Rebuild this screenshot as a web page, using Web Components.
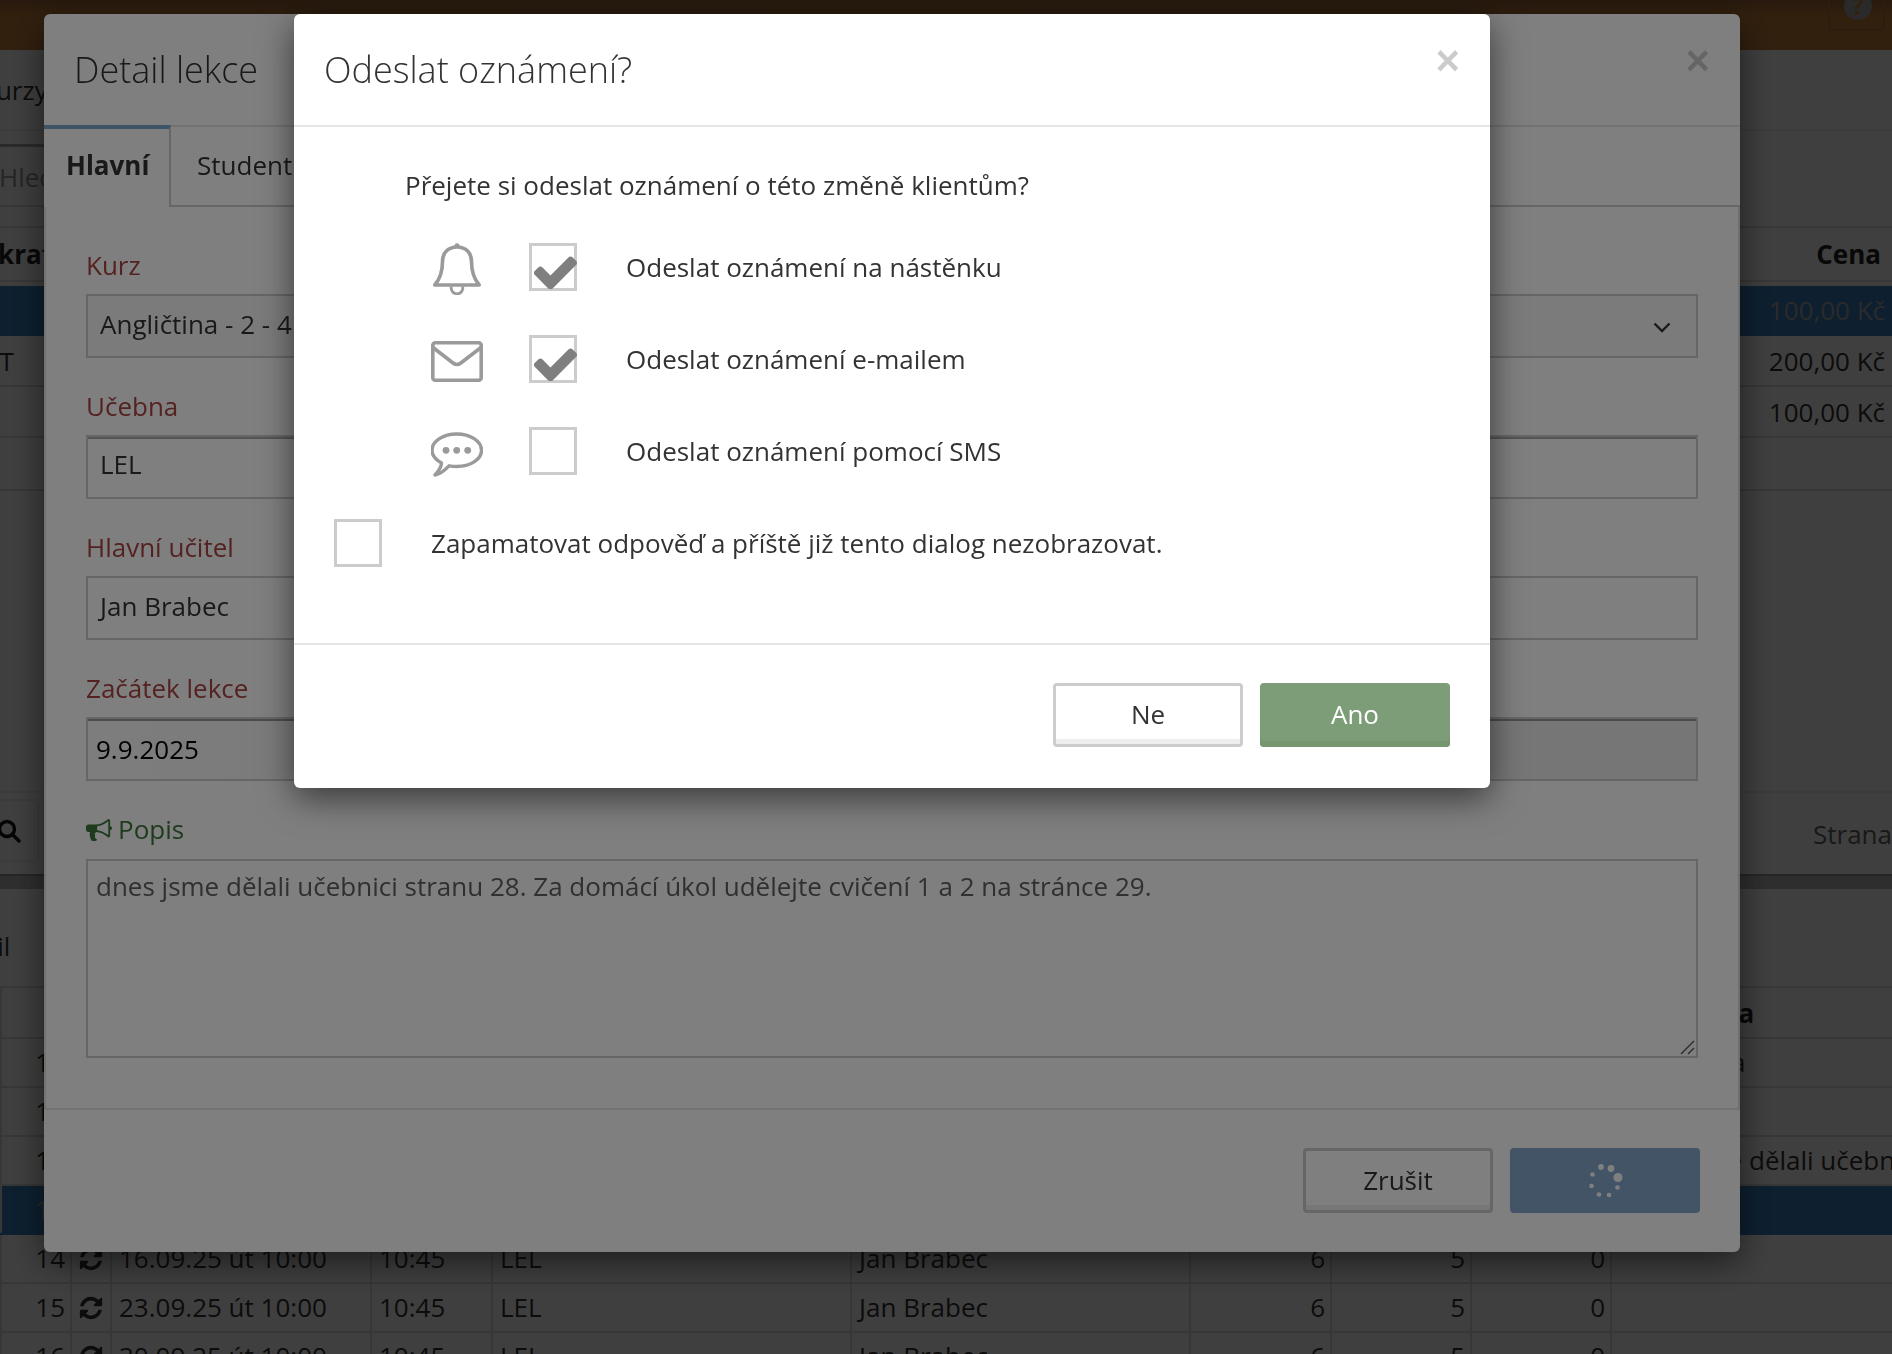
<!DOCTYPE html>
<html lang="cs">
<head>
<meta charset="utf-8">
<title>Odeslat oznámení?</title>
<style>
    html, body { margin: 0; height: 100%; overflow: hidden; }
    body { font: 26px/36px "Open Sans", sans-serif; color: #333; background: #fff; }
</style>
</head>
<body>
<lesson-page></lesson-page>
<dim-layer></dim-layer>

<modal-box style="left:44px; top:14px; width:1696px; height:1238px; --foot-bottom:39px; --btn-height:65px;">
    <span slot="title">Detail lekce</span>
    <lesson-form></lesson-form>
    <action-button slot="footer">Zrušit</action-button>
    <action-button slot="footer" kind="busy"></action-button>
</modal-box>

<dim-layer></dim-layer>

<modal-box style="left:294px; top:14px; width:1196px; height:774px; --foot-bottom:41px; --btn-height:64px;">
    <span slot="title">Odeslat oznámení?</span>
    <notify-form></notify-form>
    <action-button slot="footer">Ne</action-button>
    <action-button slot="footer" kind="ok">Ano</action-button>
</modal-box>

<script>
const ICONS = {
    check: `<svg width="43" height="35" viewBox="123 250 1548 1250"><path fill="#7f7f7f" d="M1671 566q0 40-28 68l-724 724-136 136q-28 28-68 28t-68-28l-136-136-362-362q-28-28-28-68t28-68l136-136q28-28 68-28t68 28l294 295 656-657q28-28 68-28t68 28l136 136q28 28 28 68z"/></svg>`,
    bell: `<svg width="48" height="52" viewBox="0 0 48 52" fill="none" stroke="#9a9a9a" stroke-width="3.6" stroke-linejoin="round"><circle cx="24" cy="2.6" r="2.4" fill="#9a9a9a" stroke="none"/><path d="M24 4C15 4 9.5 10 9.5 18.5C9.5 30 7 36 1.8 42H46.2C41 36 38.5 30 38.5 18.5C38.5 10 33 4 24 4Z"/><path d="M18.4 43.5a5.8 5.8 0 1 0 11.2 0" stroke-width="2.8"/></svg>`,
    mail: `<svg width="52" height="41" viewBox="0 0 52 41" fill="none" stroke="#9a9a9a" stroke-width="3.6" stroke-linejoin="round"><rect x="1.8" y="1.8" width="48.4" height="37.4" rx="2.5"/><path d="M2 6.5L22 22Q25.9 25 29.8 22L50 6.5"/></svg>`,
    sms: `<svg width="52" height="45" viewBox="0 0 52 45" fill="none" stroke="#9a9a9a" stroke-width="3.4" stroke-linejoin="round"><path d="M25.7 2C39 2 50.5 9 50.5 18.3C50.5 27.5 39 34.5 25.7 34.5C23 34.5 20.5 34.3 18 33.8C14 38 9 42 4 43C8 38.5 10.5 34.5 10.5 31C5 28 1 23.5 1 18.3C1 9 12.5 2 25.7 2Z"/><g fill="#9a9a9a" stroke="none"><circle cx="15" cy="18.3" r="3.4"/><circle cx="25.7" cy="18.3" r="3.4"/><circle cx="36.7" cy="18.3" r="3.4"/></g></svg>`,
    horn: `<svg width="26" height="24" viewBox="0 0 1792 1650"><path fill="#3c763d" d="M1664 640q53 0 90.5 37.5t37.5 90.5-37.5 90.5-90.5 37.5v384q0 52-38 90t-90 38q-417-347-812-380-58 19-91 66t-31 100.5 40 92.5q-20 33-23 65.5t6 58 33.5 55 48 50 61.5 50.5q-29 58-111.5 83t-168.5 11.5-132-55.5q-7-23-29.5-87.5t-32-94.5-23-89-15-101 3.5-98.5 22-110.5h-122q-66 0-113-47t-47-113v-192q0-66 47-113t113-47h480q435 0 896-384 52 0 90 38t38 90v384zm-128 604v-954q-394 302-768 343v270q377 42 768 341z"/></svg>`,
    sync: `<svg width="26" height="26" viewBox="0 0 1792 1792"><path fill="#333" d="M1639 1056q0 5-1 7-64 268-268 434.5t-478 166.5q-146 0-282.5-55t-243.5-157l-129 129q-19 19-45 19t-45-19-19-45v-448q0-26 19-45t45-19h448q26 0 45 19t19 45-19 45l-137 137q71 66 161 102t187 36q134 0 250-65t186-179q11-17 53-117 8-23 30-23h192q13 0 22.5 9.5t9.5 22.5zm25-800v448q0 26-19 45t-45 19h-448q-26 0-45-19t-19-45 19-45l138-138q-148-137-349-137-134 0-250 65t-186 179q-11 17-53 117-8 23-30 23h-199q-13 0-22.5-9.5t-9.5-22.5v-7q65-268 270-434.5t480-166.5q146 0 284 55.5t245 156.5l130-129q19-19 45-19t45 19 19 45z"/></svg>`
};

class DimLayer extends HTMLElement {
    constructor() {
        super();
        this.attachShadow({ mode: 'open' });
    }
    connectedCallback() {
        this.shadowRoot.innerHTML = `<style>:host { display: block; position: fixed; inset: 0; background: rgba(0,0,0,.5); }</style>`;
    }
}

class ModalBox extends HTMLElement {
    constructor() {
        super();
        this.attachShadow({ mode: 'open' });
    }
    connectedCallback() {
        this.shadowRoot.innerHTML = `
            <style>
                :host {
                    position: fixed; display: flex; flex-direction: column; box-sizing: border-box;
                    background: #fff; border-radius: 6px;
                    box-shadow: 0 10px 34px rgba(0,0,0,.55);
                }
                header {
                    flex: none; height: 113px; box-sizing: border-box; padding: 0 30px;
                    display: flex; justify-content: space-between; align-items: flex-start;
                    border-bottom: 2px solid #e5e5e5;
                    font-size: 36px; font-weight: 300; line-height: 50px;
                }
                header div { padding-top: 31px; }
                .close {
                    font: bold 42px/42px "Liberation Sans", sans-serif; color: #000; opacity: .2;
                    padding-top: 26px;
                }
                main { flex: 1; min-height: 0; display: flex; flex-direction: column; }
                footer {
                    flex: none; display: flex; justify-content: flex-end; gap: 17px;
                    padding: 38px 40px var(--foot-bottom); border-top: 2px solid #e5e5e5;
                }
            </style>
            <header><div><slot name="title"></slot></div><span class="close">×</span></header>
            <main><slot></slot></main>
            <footer><slot name="footer"></slot></footer>`;
    }
}

class ActionButton extends HTMLElement {
    constructor() {
        super();
        this.attachShadow({ mode: 'open' });
    }
    connectedCallback() {
        const kind = this.getAttribute('kind') || 'plain';
        this.shadowRoot.innerHTML = `
            <style>
                :host {
                    display: flex; align-items: center; justify-content: center; box-sizing: border-box;
                    width: 190px; height: var(--btn-height); border-radius: 4px; font-size: 26px; padding-bottom: 2px;
                }
                :host([kind="ok"]) { background: #7c9d77; color: #fff; box-shadow: inset 0 -6px 0 #76966f; }
                :host([kind="busy"]) { background: #84a8cc; color: #fff; padding-bottom: 0; }
                :host(:not([kind])) { background: #fff; border: 3px solid #ccc; box-shadow: inset 0 -5px 0 #eee; color: #333; }
            </style>
            <slot></slot>
            ${kind === 'busy' ? `<svg width="40" height="40" viewBox="-20 -20 40 40" fill="#fff">
                <circle cx="13" cy="-3.5" r="4.5"/><circle cx="6" cy="-12.5" r="3.4"/><circle cx="-4" cy="-14" r="2.9"/><circle cx="-12.5" cy="-6.5" r="2.3"/>
                <circle cx="-13.5" cy="5" r="2.3"/><circle cx="-6" cy="13.5" r="2.3"/><circle cx="4" cy="14" r="2.3"/><circle cx="12.5" cy="6.5" r="2.3"/>
            </svg>` : ''}`;
    }
}

class FieldBox extends HTMLElement {
    constructor() {
        super();
        this.attachShadow({ mode: 'open' });
    }
    connectedCallback() {
        this.shadowRoot.innerHTML = `
            <style>
                :host { display: block; margin-bottom: 30px; }
                label { display: block; height: 36px; margin-bottom: 11px; color: #a94442; }
                .input {
                    box-sizing: border-box; height: 64px; padding: 0 12px 4px; display: flex; align-items: center;
                    justify-content: space-between; border: 2px solid #ccc; background: #fff;
                }
                :host([mode="select"]) .input { background: #f6f6f6; }
                :host([mode="text"]) .input { box-shadow: inset 0 2px 0 #aaa; padding-bottom: 6px; }
                :host([mode="date"]) .input {
                    padding: 0 12px 0 8px; color: #000; box-shadow: inset 0 2px 0 #999;
                    background: linear-gradient(90deg, #fbfbfb, #ececec 40%);
                }
                svg { margin: 7px 13px 0 0; }
            </style>
            <label>${this.getAttribute('label')}</label>
            <div class="input"><span><slot></slot></span>${this.getAttribute('mode') === 'select'
                ? `<svg width="18" height="11" viewBox="0 0 18 11" fill="none" stroke="#333" stroke-width="2.4"><path d="M1.5 1.5L9 9L16.5 1.5"/></svg>` : ''}</div>`;
    }
}

class LessonForm extends HTMLElement {
    constructor() {
        super();
        this.attachShadow({ mode: 'open' });
    }
    connectedCallback() {
        this.shadowRoot.innerHTML = `
            <style>
                :host { display: flex; flex-direction: column; flex: 1; }
                nav { display: flex; height: 80px; flex: none; }
                .tab { box-sizing: border-box; padding: 0 22px; line-height: 72px; height: 78px; }
                .on {
                    width: 127px; font-weight: 700; margin-top: -2px; height: 82px;
                    border-top: 4px solid #78a8cc; border-right: 2px solid #ccc; flex: none;
                }
                .rest { flex: 1; border-bottom: 2px solid #ccc; display: flex; height: 80px; box-sizing: border-box; }
                .rest .tab { padding-left: 26px; line-height: 76px; }
                section {
                    flex: 1; box-sizing: border-box; padding: 40px 40px 0 40px;
                    border-left: 2px solid #e5e5e5; border-right: 2px solid #ddd;
                }
                .note { display: flex; align-items: center; gap: 6px; height: 36px; margin-bottom: 12px; color: #3c763d; }
                .area {
                    position: relative; box-sizing: border-box; height: 199px; padding: 7px 8px;
                    border: 2px solid #ccc; color: #606060; line-height: 36px;
                }
                .grip { position: absolute; right: 1px; bottom: 1px; }
            </style>
            <nav>
                <div class="tab on">Hlavní</div>
                <div class="rest"><div class="tab">Studenti</div><div class="tab">Docházka</div></div>
            </nav>
            <section>
                <field-box label="Kurz" mode="select">Angličtina - 2 - 4 roky</field-box>
                <field-box label="Učebna" mode="text">LEL</field-box>
                <field-box label="Hlavní učitel">Jan Brabec</field-box>
                <field-box label="Začátek lekce" mode="date">9.9.2025</field-box>
                <div class="note">${ICONS.horn}<span>Popis</span></div>
                <div class="area">dnes jsme dělali učebnici stranu 28. Za domácí úkol udělejte cvičení 1 a 2 na stránce 29.
                    <svg class="grip" width="16" height="16" viewBox="0 0 16 16" stroke="#555" stroke-width="1.4"><path d="M2 15L15 2M9 15L15 9"/></svg>
                </div>
            </section>`;
    }
}

class NotifyRow extends HTMLElement {
    constructor() {
        super();
        this.attachShadow({ mode: 'open' });
    }
    connectedCallback() {
        const on = this.hasAttribute('checked');
        this.shadowRoot.innerHTML = `
            <style>
                :host { display: flex; align-items: center; height: 48px; margin-bottom: 44px; }
                .icon { width: 124px; flex: none; display: flex; justify-content: center; padding-right: 20px; margin-top: var(--icon-drop, 10px); box-sizing: border-box; }
                :host(:not([has-icon])) .icon { display: none; }
                .box { box-sizing: border-box; width: 48px; height: 48px; flex: none; border: 3px solid #ccc; margin-right: 49px; position: relative; }
                .box svg { position: absolute; left: 2px; top: 8px; }
            </style>
            <div class="icon"><slot name="icon"></slot></div>
            <div class="box">${on ? ICONS.check : ''}</div>
            <span><slot></slot></span>`;
    }
}

class NotifyForm extends HTMLElement {
    constructor() {
        super();
        this.attachShadow({ mode: 'open' });
    }
    connectedCallback() {
        this.shadowRoot.innerHTML = `
            <style>
                :host { display: flex; flex-direction: column; flex: 1; padding: 40px 0 0 40px; }
                p { margin: 0 0 40px 71px; height: 36px; }
                .opts { margin-left: 71px; }
                .ico { display: block; }
            </style>
            <p>Přejete si odeslat oznámení o této změně klientům?</p>
            <div class="opts">
                <notify-row checked has-icon style="--icon-drop:11px"><span slot="icon" class="ico">${ICONS.bell}</span>Odeslat oznámení na nástěnku</notify-row>
                <notify-row checked has-icon style="--icon-drop:12px"><span slot="icon" class="ico">${ICONS.mail}</span>Odeslat oznámení e-mailem</notify-row>
                <notify-row has-icon style="--icon-drop:14px"><span slot="icon" class="ico">${ICONS.sms}</span>Odeslat oznámení pomocí SMS</notify-row>
            </div>
            <notify-row>Zapamatovat odpověď a příště již tento dialog nezobrazovat.</notify-row>`;
    }
}

class LessonPage extends HTMLElement {
    constructor() {
        super();
        this.attachShadow({ mode: 'open' });
    }
    connectedCallback() {
        const rows = [
            [10, '19.08.25 út 10:00'], [11, '26.08.25 út 10:00'], [12, '02.09.25 út 10:00'],
            [13, '09.09.25 út 10:00'], [14, '16.09.25 út 10:00'], [15, '23.09.25 út 10:00'], [16, '30.09.25 út 10:00']
        ];
        const lastCol = { 10: 'Gramatika', 12: 'dnes jsme dělali učebnici stranu 28.' };
        const rowHtml = rows.map(([n, date]) => `
            <div class="row${n === 13 ? ' sel' : ''}">
                <i class="r">${n}</i><i class="c">${ICONS.sync}</i><i>${date}</i><i>10:45</i><i>LEL</i><i>Jan Brabec</i>
                <i class="r">6</i><i class="r">5</i><i class="r">0</i><i>${lastCol[n] || ''}</i>
            </div>`).join('');
        this.shadowRoot.innerHTML = `
            <style>
                :host { display: block; height: 1354px; overflow: hidden; color: #333; background: #fff; }
                .bar {
                    height: 50px; position: relative; overflow: hidden;
                    background: linear-gradient(#9c6636, #c8803c 30%);
                }
                .help {
                    position: absolute; right: 7px; top: -4px; width: 57px; height: 35px; box-sizing: border-box;
                    border: 2px solid #b87434; border-radius: 4px;
                }
                .help svg { position: absolute; left: 13px; top: -7px; }
                .title { height: 81px; box-sizing: border-box; margin-left: -20px; line-height: 80px; border-bottom: 2px solid #eee; }
                .search { height: 95px; box-sizing: border-box; padding-top: 13px; }
                .search div { height: 63px; box-sizing: border-box; border: 2px solid #ddd; border-top: 3px solid #aaa; line-height: 60px; margin-left: -3px; color: #999; width: 400px; }
                .t1 { border-top: 2px solid #ddd; }
                .t1 .row { display: flex; justify-content: space-between; padding: 0 7px 0 0; height: 51px; line-height: 50px; border-bottom: 2px solid #ddd; box-sizing: border-box; }
                .t1 .row span:first-child { margin-left: -17px; }
                .t1 .head { height: 54px; line-height: 52px; font-weight: 700; color: #222; margin-bottom: 4px; padding-right: 11px; }
                .t1 .sel { background: #3880c0; color: #aaa; border-color: #3880c0; height: 50px; line-height: 48px; }
                .t1 .blank { height: 53px; }
                .gap { height: 300px; }
                .pager {
                    height: 83px; border-top: 2px solid #eee; position: relative; box-sizing: border-box;
                    display: flex; justify-content: flex-end; align-items: center; color: #666;
                }
                .pager .lens { position: absolute; left: -40px; top: 6px; width: 79px; height: 63px; box-sizing: border-box; border: 2px solid #eee; border-radius: 6px; display: flex; align-items: center; justify-content: flex-end; padding-right: 16px; }
                .thick { height: 15px; background: #bbb; border-top: 2px solid #999; box-sizing: border-box; }
                .sub { height: 97px; line-height: 114px; margin-left: -60px; }
                .t2 .row, .t2 .head {
                    display: grid; height: 49px; line-height: 47px; box-sizing: border-box; border-bottom: 2px solid #ddd;
                    grid-template-columns: 2px 70px 40px 260px 121px 359px 339px 141px 140px 140px 400px;
                    white-space: nowrap;
                }
                .t2 .row i, .t2 .head b { font-style: normal; border-right: 2px solid #ddd; padding: 0 7px; box-sizing: border-box; overflow: hidden; }
                .t2 .row i.r { text-align: right; padding-right: 5px; }
                .t2 .row i.c { padding: 0; display: flex; align-items: center; justify-content: center; }
                .t2 .row i:first-child { grid-column: 1 / 3; border-left: 2px solid #ddd; }
                .t2 .head { height: 53px; line-height: 51px; border-top: 2px solid #ddd; }
                .t2 .head b { overflow: visible; color: #222; }
                .t2 .head b:first-child { padding: 0; }
                .t2 .sel { background: #3880c0; color: #aaa; border-color: #3880c0; }
            </style>
            <div class="bar">
                <div class="help"><svg width="30" height="30" viewBox="0 0 30 30"><circle cx="15" cy="15" r="14" fill="#a8a8a8"/><text x="15" y="24" text-anchor="middle" font-size="25" font-weight="700" font-family="Open Sans" fill="#c8803c">?</text></svg></div>
            </div>
            <div class="title">Kurzy</div>
            <div class="search"><div>Hledat</div></div>
            <div class="t1">
                <div class="row head"><span>Zkratka</span><span>Cena</span></div>
                <div class="row sel"><span></span><span>100,00 Kč</span></div>
                <div class="row"><span>AT</span><span>200,00 Kč</span></div>
                <div class="row"><span></span><span>100,00 Kč</span></div>
                <div class="row blank"></div>
            </div>
            <div class="gap"></div>
            <div class="pager"><div class="lens"><svg width="24" height="24" viewBox="0 0 24 24" fill="none" stroke="#111" stroke-width="3.4"><circle cx="10" cy="10" r="7.5"/><path d="M15.5 15.5L22 22" stroke-linecap="round"/></svg></div><span>Strana</span></div>
            <div class="thick"></div>
            <div class="sub">Detail</div>
            <div class="t2">
                <div class="head"><b></b><b></b><b></b><b>Začátek</b><b>Konec</b><b>Učebna</b><b>Učitel</b><b></b><b></b><b></b><b>Poznámka</b></div>
                ${rowHtml}
            </div>`;
    }
}

customElements.define('dim-layer', DimLayer);
customElements.define('modal-box', ModalBox);
customElements.define('action-button', ActionButton);
customElements.define('field-box', FieldBox);
customElements.define('lesson-form', LessonForm);
customElements.define('notify-row', NotifyRow);
customElements.define('notify-form', NotifyForm);
customElements.define('lesson-page', LessonPage);
</script>
</body>
</html>
